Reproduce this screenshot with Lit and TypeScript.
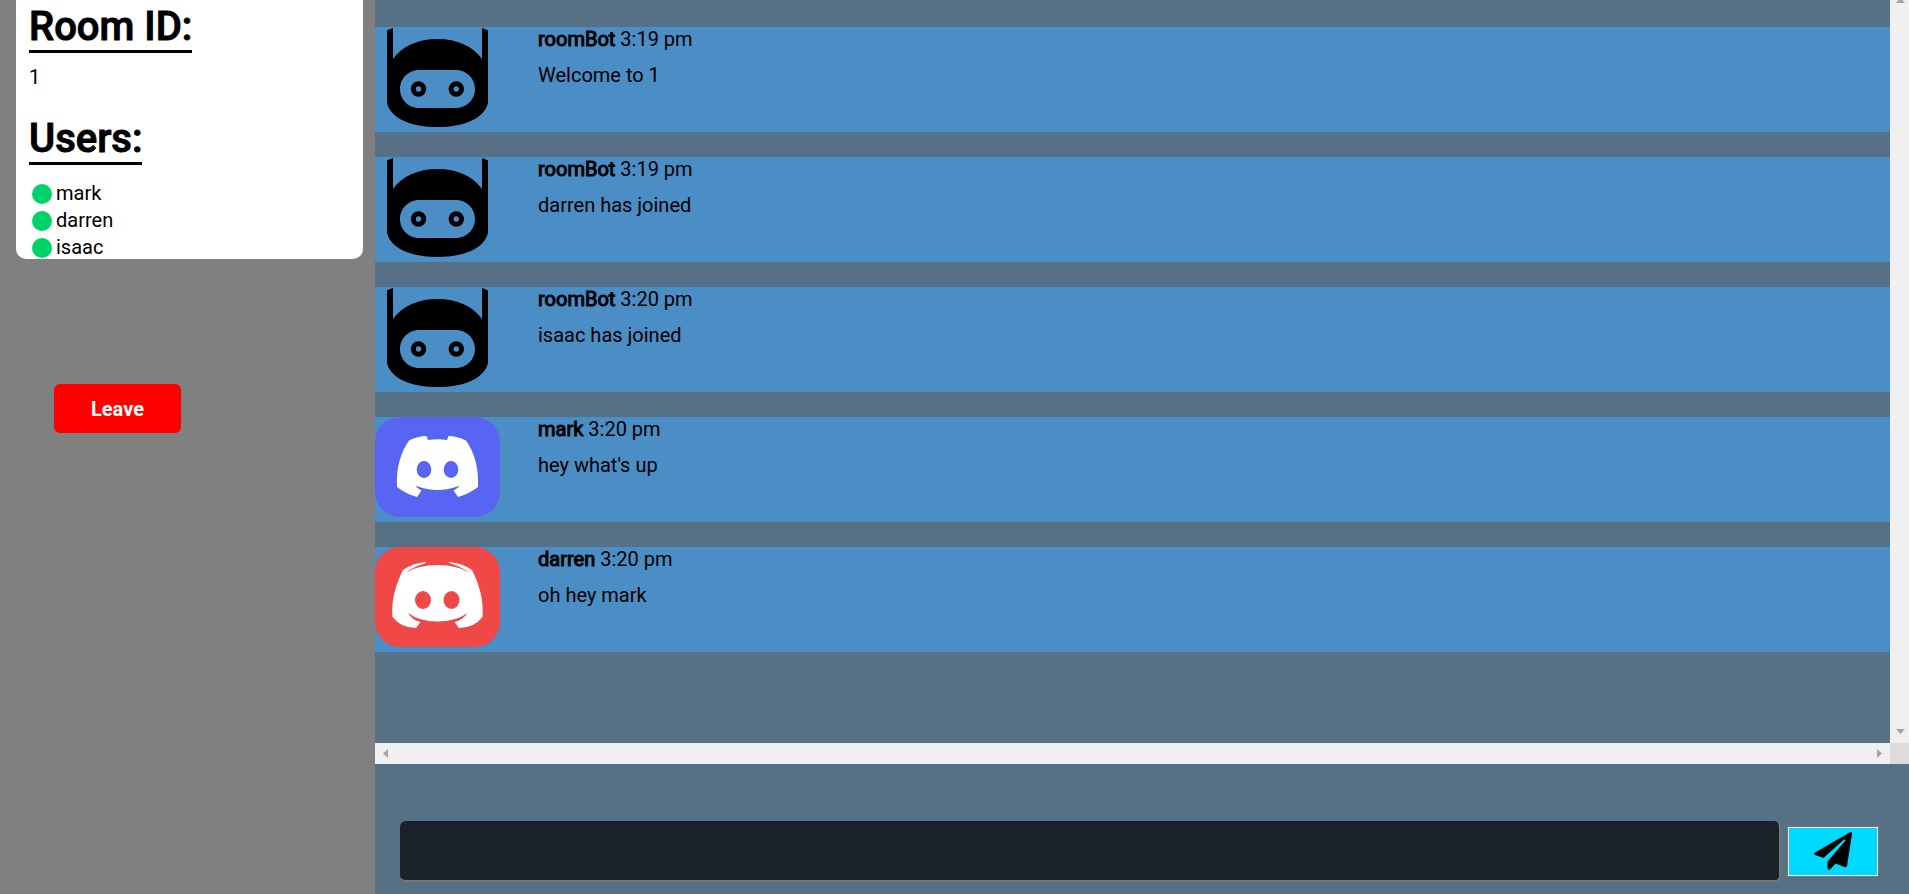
import { LitElement, html, css, svg } from "lit";
import { customElement, property, state } from "lit/decorators.js";

interface Message {
  user: string;
  time: string;
  text: string;
  avatar: "bot" | "blurple" | "red";
}

const botAvatar = svg`
  <svg class="avatar" viewBox="0 0 125 100" aria-hidden="true">
    <path fill="#000" fill-rule="evenodd" d="M12 3.500Q14 2 18 1V32C27 19 43 12 62.500 12S98 19 107 32V1Q111 2 113 3.500V76C109 92 88 100 62.500 100S16 92 12 76ZM44 43C33 43 25 52 25 62S33 81 44 81H81C92 81 100 72 100 62S92 43 81 43Z"/>
    <g fill="none" stroke="#000" stroke-width="5"><circle cx="43.500" cy="62" r="5.200"/><circle cx="81.300" cy="62" r="5.200"/></g>
  </svg>`;

const blurpleAvatar = svg`
  <svg class="avatar" viewBox="0 0 125 100" aria-hidden="true">
    <rect width="125" height="100" rx="25" fill="#5865f2"/>
    <path fill="#fff" d="M34 23.500Q43 19 51.500 19L53 23Q62.500 21.500 72 23L73.500 19Q82 19 91 23.500C99 35 104 50 103 70Q94 77 83 80L78.500 73.500L82.500 71L84 69.500L83.500 69Q62.500 77 41.500 69L41 69.500L42.500 71L46.500 73.500L42 80Q31 77 22 70C21 50 26 35 34 23.500Z"/>
    <ellipse cx="49" cy="52.500" rx="7.300" ry="8.400" fill="#5865f2"/>
    <ellipse cx="76" cy="52.500" rx="7.300" ry="8.400" fill="#5865f2"/>
  </svg>`;

const redAvatar = svg`
  <svg class="avatar" viewBox="0 0 125 100" aria-hidden="true">
    <rect width="125" height="100" rx="25" fill="#f04747"/>
    <path fill="#fff" d="M28 23Q38 16 50.500 15Q53 15.500 48 17Q39 19.500 31 25.500Q43 18 62.500 18T94 25.500Q86 19.500 77 17Q72 15.500 74.500 15Q87 16 97 23C104 37 109 53 107.500 70Q99 81 84 81L79.500 75Q88 73 92.500 66Q81 74.500 62.500 74.500T33 66Q37 73 45.500 75L41 81Q26 81 17.500 70C16 53 21 37 28 23Z"/>
    <ellipse cx="48" cy="53" rx="8" ry="9" fill="#f04747"/>
    <ellipse cx="76.500" cy="53" rx="8" ry="9" fill="#f04747"/>
  </svg>`;

const avatars = { bot: botAvatar, blurple: blurpleAvatar, red: redAvatar };

@customElement("chat-message")
class ChatMessage extends LitElement {
  @property({ attribute: false }) message!: Message;

  static styles = css`
    :host {
      display: flex;
      gap: 38px;
      height: 105px;
      background: #4b8dc5;
    }
    .avatar {
      display: block;
      flex: none;
      width: 125px;
      height: 100px;
    }
    .meta,
    .text {
      margin: 0;
      line-height: 24px;
    }
    .user {
      font-weight: 400;
      -webkit-text-stroke: 1px #000;
    }
    .text {
      margin-top: 12px;
    }
  `;

  render() {
    const { user, time, text, avatar } = this.message;
    return html`
      ${avatars[avatar]}
      <div>
        <p class="meta"><b class="user">${user}</b> ${time}</p>
        <p class="text">${text}</p>
      </div>
    `;
  }
}

@customElement("room-panel")
class RoomPanel extends LitElement {
  @property() room = "";
  @property({ attribute: false }) users: string[] = [];

  static styles = css`
    :host {
      display: block;
      background: #808080;
    }
    .card {
      display: flow-root;
      margin: 0 12px 0 16px;
      padding: 0 13px;
      background: #fff;
      border-radius: 0 0 10px 10px;
    }
    .title {
      width: fit-content;
      margin: 0;
      padding-top: 3px;
      border-bottom: 3px solid #000;
      font-size: 40px;
      font-weight: 500;
      -webkit-text-stroke: 1px #000;
      line-height: 47px;
    }
    .room {
      margin: 12px 0 23px;
      line-height: 24px;
    }
    .users {
      margin: 0 0 -2px;
      padding: 15px 0 0;
      list-style: none;
    }
    .user {
      display: flex;
      align-items: center;
      gap: 4px;
      padding-left: 3px;
      line-height: 27px;
    }
    .dot {
      width: 20px;
      height: 20px;
      border-radius: 50%;
      background: #00d26a;
    }
    .leave {
      display: block;
      width: 127px;
      height: 49px;
      margin: 125px 0 0 54px;
      border: 0;
      border-radius: 6px;
      background: #f00;
      color: #fff;
      font: bold 20px Roboto, sans-serif;
    }
  `;

  render() {
    return html`
      <section class="card">
        <h1 class="title">Room ID:</h1>
        <p class="room">${this.room}</p>
        <h1 class="title">Users:</h1>
        <ul class="users">
          ${this.users.map(
            (u) => html`<li class="user"><span class="dot"></span>${u}</li>`
          )}
        </ul>
      </section>
      <button class="leave" type="button">Leave</button>
    `;
  }
}

@customElement("app-root")
class AppRoot extends LitElement {
  @state() messages: Message[] = [
    { user: "roomBot", time: "3:19 pm", text: "Welcome to 1", avatar: "bot" },
    { user: "roomBot", time: "3:19 pm", text: "darren has joined", avatar: "bot" },
    { user: "roomBot", time: "3:20 pm", text: "isaac has joined", avatar: "bot" },
    { user: "mark", time: "3:20 pm", text: "hey what's up", avatar: "blurple" },
    { user: "darren", time: "3:20 pm", text: "oh hey mark", avatar: "red" },
  ];

  static styles = css`
    :host {
      display: grid;
      grid-template-columns: 375px 1fr;
      height: 100vh;
      overflow: hidden;
      background: #567186;
      color: #000;
      font: 400 20px Roboto, sans-serif;
    }
    .main {
      display: flex;
      flex-direction: column;
      min-width: 0;
    }
    .viewport {
      flex: 1;
      display: grid;
      grid-template-columns: 1fr 19px;
      grid-template-rows: 1fr 21px;
      min-height: 0;
    }
    .log {
      display: flex;
      flex-direction: column;
      gap: 25px;
      padding-top: 27px;
      overflow: hidden;
    }
    .bar {
      display: flex;
      justify-content: space-between;
      align-items: center;
      background: #f0f0f0;
    }
    .vertical {
      flex-direction: column;
      padding: 0 0 9px 1px;
    }
    .horizontal {
      padding: 0 8px;
    }
    .arrow {
      display: block;
      fill: #a3a3a3;
    }
    .corner {
      background: #dcdcdc;
    }
    .composer {
      display: flex;
      align-items: center;
      gap: 7px;
      height: 130px;
      padding: 44px 31px 0 25px;
      box-sizing: border-box;
    }
    .entry {
      flex: 1;
      min-width: 0;
      height: 61px;
      box-sizing: border-box;
      padding: 0 12px;
      border: solid #767676;
      border-width: 0 2px 2px 0;
      border-radius: 6px;
      background: #1c2229;
      color: #fff;
      font: inherit;
      outline: 0;
    }
    .send {
      display: flex;
      align-items: center;
      justify-content: center;
      width: 90px;
      height: 49px;
      padding: 0;
      border: 1px solid #efefef;
      outline: 1px solid #767676;
      background: #00d9ff;
    }
    .plane {
      width: 38px;
      height: 38px;
    }
  `;

  render() {
    return html`
      <room-panel .room=${"1"} .users=${["mark", "darren", "isaac"]}></room-panel>
      <main class="main">
        <div class="viewport">
          <div class="log">
            ${this.messages.map((m) => html`<chat-message .message=${m}></chat-message>`)}
          </div>
          <div class="bar vertical" aria-hidden="true">
            <svg class="arrow" width="9" height="3" viewBox="0 0 9 3"><path d="M2.500 0H6.500L9 3H0Z" /></svg>
            <svg class="arrow" width="9" height="5" viewBox="0 0 9 5"><path d="M0 0H9L4.500 5Z" /></svg>
          </div>
          <div class="bar horizontal" aria-hidden="true">
            <svg class="arrow" width="5" height="9" viewBox="0 0 5 9"><path d="M5 0V9L0 4.500Z" /></svg>
            <svg class="arrow" width="5" height="9" viewBox="0 0 5 9"><path d="M0 0V9L5 4.500Z" /></svg>
          </div>
          <div class="corner"></div>
        </div>
        <form class="composer" @submit=${(e: Event) => e.preventDefault()}>
          <input class="entry" type="text" aria-label="Message" />
          <button class="send" type="submit" aria-label="Send">
            <svg class="plane" viewBox="0 0 38 38" aria-hidden="true">
              <path d="M36.500 0Q38.500 0 38 2L33 34Q32.500 36 30.500 35L21.500 31.500L16 37.500Q13.500 38.500 13.500 35.500V29.500L31.500 8.500Q31.500 7 30 7.500L9.500 26L1 23Q-1 21.500 1 20.500Z" />
            </svg>
          </button>
        </form>
      </main>
    `;
  }
}
